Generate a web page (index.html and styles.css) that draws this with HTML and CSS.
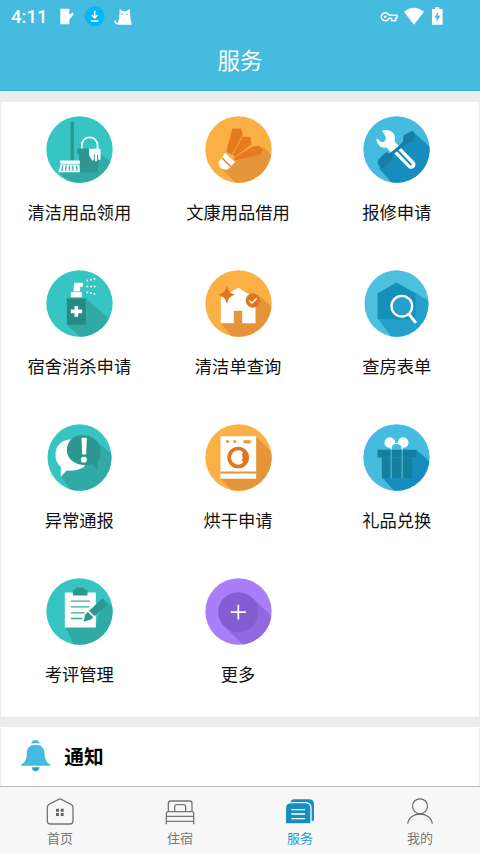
FILE: index.html
```html
<!DOCTYPE html>
<html lang="zh-CN">
<head>
<meta charset="utf-8">
<meta name="viewport" content="width=device-width">
<title>服务</title>
<link rel="stylesheet" href="styles.css">
</head>
<body>
<header class="header">
  <div class="status">
    <span class="clock">4:11</span>
    <svg class="status-left" viewBox="170 10 240 75">
      <path fill="#fff" d="M180 24H207V43L217 35L220 41L207 57V71H180Z"/>
      <circle cx="283" cy="47" r="30" fill="#00b7fd"/>
      <path d="M283 30V49M274 43L283 52L292 43M272 61H294" fill="none" stroke="#fff" stroke-width="4.5"/>
      <path fill="#fff" d="M358 24L367 32H378L388 24L390 48L394 72H355C344 72 340 64 343 58L347 60C346 65 349 67 354 65C356 52 358 43 358 24Z"/>
      <path d="M363 41H368M378 41H383" stroke="#45bbdf" stroke-width="3"/>
    </svg>
    <svg class="status-right" viewBox="415 10 205 75">
      <path d="M448 44H472V52H468V60H456V53H448A12 12 0 1 1 448 44Z" fill="none" stroke="#fff" stroke-width="4.5" stroke-linejoin="round"/>
      <circle cx="437" cy="48.500" r="4" fill="#fff"/>
      <path fill="#fff" d="M493 33Q523 10 553 33L523 72Z"/>
      <path fill="#fff" d="M577 25H586V20H599V25H609V72H577Z"/>
      <path fill="#45bbdf" d="M595 33L584 51H591V64L602 45H595Z"/>
    </svg>
  </div>
  <h1 class="title">服务</h1>
</header>

<main class="content">
  <section class="services">
    <a class="service">
      <svg class="icon" viewBox="78.500 34.500 201 201">
        <clipPath id="c1"><circle cx="179" cy="135" r="99.500"/></clipPath>
        <g clip-path="url(#c1)">
          <path fill="#37c5c3" d="M70 30H290V240H70Z"/>
          <path fill="#31aaa6" d="M238 146L290 184V240H150L119 203H180Z"/>
          <path fill="#2f9590" d="M152 52H162V168H152ZM172 132H207V147H238L234 204H180L176 147H172Z"/>
          <path d="M186 132V122C186 91 233 91 233 122V134" fill="none" stroke="#fff" stroke-width="5"/>
          <path fill="#fff" d="M208 133H242V164Q238 170 235 163V150H232V168Q228 174 225 168V150H222V166Q218 172 215 164L208 153ZM121 168H180V178H121ZM122 180H179L180 203H116Z"/>
          <path d="M129 183L126 199M139 183L137 199M149 183V199M159 183L160 199M170 183L171 199" stroke="#37b5b2" stroke-width="4"/>
        </g>
      </svg>
      <span class="label">清洁用品领用</span>
    </a>
    <a class="service">
      <svg class="icon" viewBox="73.500 34.500 201 201">
        <clipPath id="c2"><circle cx="174" cy="135" r="99.500"/></clipPath>
        <g clip-path="url(#c2)">
          <path fill="#fbb045" d="M70 30H290V240H70Z"/>
          <path fill="#e69439" d="M247 127L290 165V245H175L125 194L164 173Z"/>
          <path fill="#e57b20" d="M155 73L182 72L187 89L157 151L137 143ZM184 97H210L213 119L164 158L157 151ZM216 126L236 124L247 137L240 149L164 169L159 161Z"/>
          <path d="M187 91L156 151M213 121L161 161" stroke="#f6a441" stroke-width="3"/>
          <path fill="#fff" d="M134 145L163 173L145 193Q136 199 124 193Q113 185 115 172Z"/>
          <path d="M124 160L151 187" stroke="#e57b20" stroke-width="4"/>
        </g>
      </svg>
      <span class="label">文康用品借用</span>
    </a>
    <a class="service">
      <svg class="icon" viewBox="69.500 34.500 201 201">
        <clipPath id="c3"><circle cx="170" cy="135" r="99.500"/></clipPath>
        <g clip-path="url(#c3)">
          <path fill="#45bbdf" d="M60 30H290V240H60Z"/>
          <path fill="#168dbd" d="M219 81L290 145V245H165L117 191Z"/>
          <path d="M166 131L214 180" stroke="#fff" stroke-width="26" stroke-linecap="round"/>
          <path d="M174 139L213 180" stroke="#168dbd" stroke-width="6" stroke-linecap="round"/>
          <path fill="#fff" d="M126 79C148 71 172 86 164 110L174 122L153 143L140 129C124 133 109 119 110 101L126 113Q136 114 138 103Q139 96 126 79Z"/>
          <path fill="#177ea7" d="M191 92L218 79L225 86L219 112L202 117L158 151L158 164L129 191Q119 188 114 178L115 166L138 143L151 146L189 113Z"/>
        </g>
      </svg>
      <span class="label">报修申请</span>
    </a>
    <a class="service">
      <svg class="icon" viewBox="78.500 29.500 201 201">
        <clipPath id="c4"><circle cx="179" cy="130" r="99.500"/></clipPath>
        <g clip-path="url(#c4)">
          <path fill="#37c5c3" d="M70 25H290V240H70Z"/>
          <path fill="#31aaa6" d="M198 115L285 190V240H192L141 194Z"/>
          <path fill="#268b85" d="M141 114H198V194H141Z"/>
          <path fill="#fff" d="M163 68H189V80H181V94H161ZM153 96H186V111H153ZM164 138H175V148H187V159H175V170H164V159H153V148H164Z"/>
          <path d="M200 62L228 55M200 79H230M200 96L228 102" stroke="#fff" stroke-width="5" stroke-dasharray="5 6"/>
        </g>
      </svg>
      <span class="label">宿舍消杀申请</span>
    </a>
    <a class="service">
      <svg class="icon" viewBox="554.500 29.500 201 201">
        <clipPath id="c5"><circle cx="655" cy="130" r="99.500"/></clipPath>
        <g clip-path="url(#c5)">
          <path fill="#fbb045" d="M550 25H765V240H550Z"/>
          <path fill="#e69439" d="M713 104L765 148V240H645L602 189Z"/>
          <path fill="#fff" d="M655 83L715 121L706 132V189H602V112Z"/>
          <path fill="#e69439" d="M641 152H666V190H641Z"/>
          <path fill="#e07620" d="M620 77Q624 99 644 104Q624 109 620 131Q616 109 594 104Q616 99 620 77Z"/>
          <circle cx="698" cy="121" r="21.500" fill="#e07620"/>
          <path d="M687 121L695 129L710 114" fill="none" stroke="#fff" stroke-width="4"/>
        </g>
      </svg>
      <span class="label">清洁单查询</span>
    </a>
    <a class="service">
      <svg class="icon" viewBox="70.500 29.500 201 201">
        <clipPath id="c6"><ellipse cx="171" cy="130" rx="96" ry="99.500"/></clipPath>
        <g clip-path="url(#c6)">
          <path fill="#4dc0e0" d="M60 25H285V240H60Z"/>
          <path fill="#23a0cb" d="M228 97L290 137V240H163L117 177Z"/>
          <path fill="#168fb9" d="M171 67L228 99V177H114V99Z"/>
          <circle cx="187" cy="138" r="31" fill="#23a0cb" stroke="#fff" stroke-width="7"/>
          <path d="M209 163L227 185" stroke="#fff" stroke-width="9" stroke-linecap="round"/>
        </g>
      </svg>
      <span class="label">查房表单</span>
    </a>
    <a class="service">
      <svg class="icon" viewBox="79.500 26.500 201 201">
        <clipPath id="c7"><ellipse cx="180" cy="127" rx="96" ry="99.500"/></clipPath>
        <g clip-path="url(#c7)">
          <path fill="#37c5c3" d="M70 20H290V240H70Z"/>
          <path fill="#31aaa6" d="M232 78L290 128V240H165L124 184Z"/>
          <path fill="#fff" d="M160 73C127 70 108 91 108 118C108 134 112 145 124 155V185L141 166C166 169 190 162 199 149L146 112Z"/>
          <path fill="#2d9691" d="M193 60C163 58 142 79 142 106C143 131 165 149 197 150Q211 151 219 148L234 165L233 140C246 129 246 111 240 91Q227 61 193 60Z"/>
          <path fill="#fff" d="M186 68H202L200 118H188Z"/>
          <circle cx="193" cy="134" r="9" fill="#fff"/>
        </g>
      </svg>
      <span class="label">异常通报</span>
    </a>
    <a class="service">
      <svg class="icon" viewBox="553.500 26.500 201 201">
        <clipPath id="c8"><circle cx="654" cy="127" r="99.500"/></clipPath>
        <g clip-path="url(#c8)">
          <path fill="#fbb045" d="M550 20H765V240H550Z"/>
          <path fill="#e69439" d="M706 64L765 122V240H648L600 190Z"/>
          <path fill="#fff" d="M600 63H707V191H600Z"/>
          <path fill="#e69439" d="M600 169H707V175H600Z"/>
          <circle cx="621" cy="79" r="4.500" fill="#e69439"/><circle cx="643" cy="79" r="4.500" fill="#e69439"/>
          <path fill="#e69439" d="M669 75H691V84H669Z"/>
          <circle cx="653" cy="127" r="27" fill="#fff" stroke="#e07620" stroke-width="11"/>
          <path fill="#e07620" d="M672 109Q660 117 667 127Q661 138 671 146L682 127Z"/>
        </g>
      </svg>
      <span class="label">烘干申请</span>
    </a>
    <a class="service">
      <svg class="icon" viewBox="69.500 26.500 201 201">
        <clipPath id="c9"><circle cx="170" cy="127" r="99.500"/></clipPath>
        <g clip-path="url(#c9)">
          <path fill="#45bbdf" d="M60 20H290V240H60Z"/>
          <path fill="#168dbd" d="M229 104L290 156V240H175L127 188L218 125Z"/>
          <circle cx="150" cy="82" r="16" fill="#fff"/><circle cx="190" cy="82" r="16" fill="#fff"/>
          <path d="M154 104V99C154 80 187 80 187 99V104" fill="#45bbdf" stroke="#fff" stroke-width="4"/>
          <path fill="#147f9f" d="M113 104H229V126H217V189H126V126H113Z"/>
          <path d="M120 127H218" stroke="#168dbd" stroke-width="2"/>
          <path d="M154 104V190M187 104V190" stroke="#4bb2c9" stroke-width="4"/>
        </g>
      </svg>
      <span class="label">礼品兑换</span>
    </a>
    <a class="service">
      <svg class="icon" viewBox="78.500 23.500 201 201">
        <clipPath id="c10"><circle cx="179" cy="124" r="99.500"/></clipPath>
        <g clip-path="url(#c10)">
          <path fill="#37c5c3" d="M70 20H290V240H70Z"/>
          <path fill="#31aaa6" d="M250 86L290 120V240H169L138 171H227Z"/>
          <path fill="#fff" d="M135 67H228V172H135Z"/>
          <path fill="#2d9691" d="M159 59H168V52H193V59H203V76H159ZM247 85L263 102L213 148L191 155L196 133Z"/>
          <path d="M153 93H210M153 110H208M153 128H195M153 145H188" stroke="#37aaa6" stroke-width="4"/>
          <path d="M205 123L223 140" stroke="#fff" stroke-width="5"/>
        </g>
      </svg>
      <span class="label">考评管理</span>
    </a>
    <a class="service">
      <svg class="icon" viewBox="554.500 23.500 201 201">
        <clipPath id="c11"><circle cx="655" cy="124" r="99.500"/></clipPath>
        <g clip-path="url(#c11)">
          <path fill="#a87ff8" d="M550 20H765V240H550Z"/>
          <path fill="#9169df" d="M701 86L765 148V240H685L609 165Z"/>
          <circle cx="654" cy="126" r="60" fill="#845dd2"/>
          <path d="M632 126H677M654.500 104V148" stroke="#fff" stroke-width="5"/>
        </g>
      </svg>
      <span class="label">更多</span>
    </a>
  </section>

  <section class="notice">
    <svg class="bell" viewBox="60 105 94 99">
      <path fill="#45bbdf" d="M94 119Q96 108 107 108Q117 108 119 119Q107 115 94 119ZM63 185V182Q79 175 80 154C79 133 88 122 107 122C126 122 134 133 134 154Q136 175 151 182V185Z"/>
      <path fill="#249fcf" d="M95 190H119Q116 202 107 202Q98 202 95 190Z"/>
    </svg>
    <h2 class="notice-title">通知</h2>
  </section>
</main>

<nav class="tabs">
  <a class="tab">
    <svg class="tab-icon" viewBox="135 275 90 85">
      <path d="M142 307Q142 300 147 297L176 282Q180 280 184 282L213 297Q219 300 219 307V347Q219 356 210 356H151Q142 356 142 347Z" fill="none" stroke="#777" stroke-width="4"/>
      <path fill="#666" d="M168 310H177V319H168ZM182 310H191V319H182ZM168 323H177V332H168ZM182 323H191V332H182Z"/>
    </svg>
    <span>首页</span>
  </a>
  <a class="tab">
    <svg class="tab-icon" viewBox="495 275 90 85">
      <path d="M505 318V294Q505 287 512 287H569Q576 287 576 294V318M499 357V325Q499 319 505 319H576Q581 319 581 325V357M499 333H581M499 348H581M524 318V304Q524 298 530 298H550Q557 298 557 304V318" fill="none" stroke="#777" stroke-width="4"/>
    </svg>
    <span>住宿</span>
  </a>
  <a class="tab tab-active">
    <svg class="tab-icon" viewBox="135 275 90 85">
      <path fill="#168fc0" d="M151 291Q154 282 162 282H207Q221 282 222 295V346H215V310Q215 290 197 290ZM138 308Q139 294 153 294H198Q211 295 211 309V354H138Z"/>
      <path d="M154 313H195M154 326H195M154 340H195" stroke="#fff" stroke-width="4"/>
    </svg>
    <span>服务</span>
  </a>
  <a class="tab">
    <svg class="tab-icon" viewBox="495 275 90 85">
      <circle cx="540" cy="303" r="22.500" fill="none" stroke="#666" stroke-width="3.500"/>
      <path d="M503 355C508 317 572 317 577 355" fill="none" stroke="#666" stroke-width="3.500"/>
    </svg>
    <span>我的</span>
  </a>
</nav>
</body>
</html>
```

FILE: styles.css
```css
* { box-sizing: border-box; }

body {
  margin: 0;
  height: 854px;
  display: flex;
  flex-direction: column;
  overflow: hidden;
  background: #ececec;
  color: #111;
  font-family: "Noto Sans CJK SC", sans-serif;
}

.header {
  height: 91px;
  flex: none;
  background: #45bbdf;
  border-bottom: 1px solid #3eb2d7;
  color: #fff;
}

.status {
  height: 32px;
  display: flex;
  align-items: flex-start;
  padding: 3.5px 33.5px 0 11px;
}

.clock {
  width: 45.7px;
  padding-top: 2.5px;
  font: 500 18.5px/22px Roboto, sans-serif;
}

.status-left { width: 80px; height: 25px; }
.status-right { width: 68.3px; height: 25px; margin-left: auto; }

.title {
  margin: 11px 0 0;
  text-align: center;
  font-size: 22.5px;
  font-weight: 400;
  line-height: 32px;
}

.content {
  flex: 1;
  display: flex;
  flex-direction: column;
  gap: 10px;
  padding: 11px 1px 0;
}

.services {
  height: 615px;
  display: grid;
  grid-template-columns: repeat(3, 158.7px);
  grid-auto-rows: 154px;
  padding-top: 14px;
  background: #fff;
}

.service {
  display: flex;
  flex-direction: column;
  align-items: center;
  margin-left: -1px;
  margin-right: 1px;
}

.icon { width: 67px; height: 67px; flex: none; }

.label {
  margin-top: 16px;
  font-size: 17.3px;
  line-height: 26px;
  white-space: nowrap;
}

.notice {
  flex: 1;
  display: flex;
  align-items: center;
  gap: 13px;
  padding: 0 0 2px 19px;
  background: #fff;
}

.bell { width: 31.3px; height: 33px; }

.notice-title {
  margin: 0;
  color: #000;
  font-size: 19.7px;
  font-weight: 700;
  line-height: 28px;
}

.tabs {
  height: 68px;
  flex: none;
  display: grid;
  grid-template-columns: repeat(4, 1fr);
  border-top: 1px solid #bdbdbd;
  background: #f7f7f7;
  color: #777;
  font-size: 13px;
  line-height: 18px;
}

.tab {
  display: flex;
  flex-direction: column;
  align-items: center;
  gap: 4px;
  padding-top: 9.500px;
}

.tab-icon { width: 30px; height: 28.3px; }
.tab-active { color: #1c9ccb; }
```
